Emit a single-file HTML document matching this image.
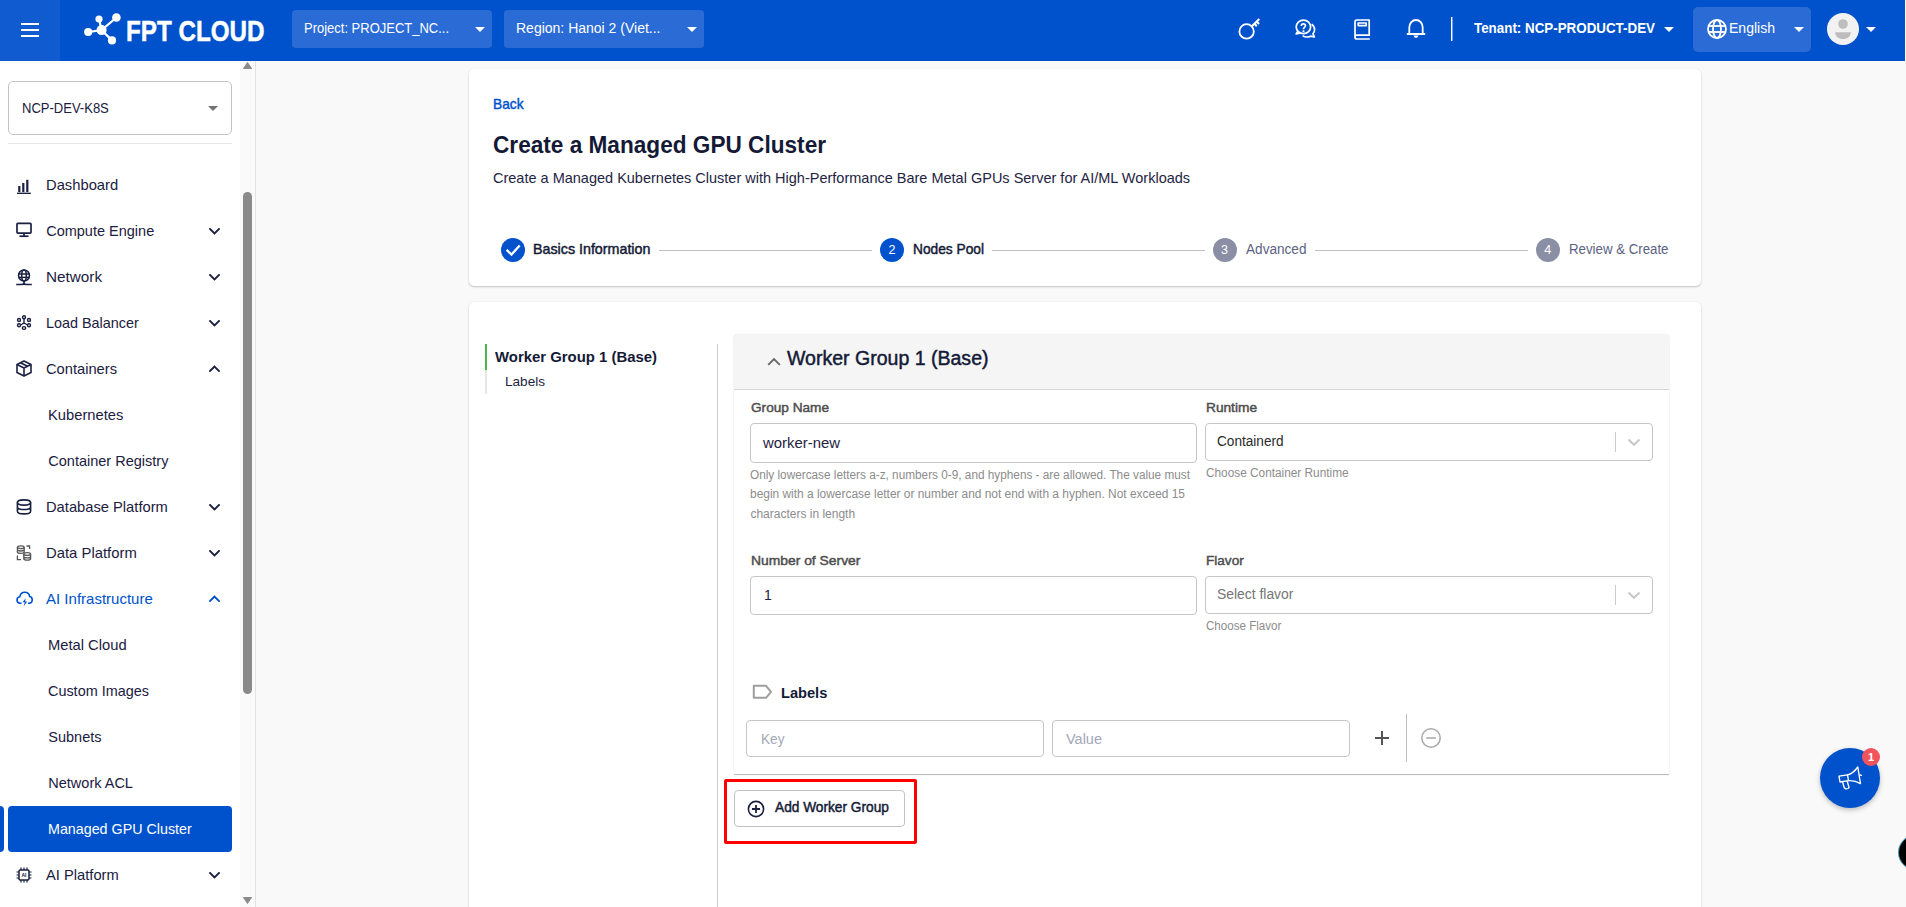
<!DOCTYPE html>
<html><head><meta charset="utf-8"><title>Create a Managed GPU Cluster</title>
<style>
html,body{margin:0;padding:0;width:1906px;height:907px;overflow:hidden;background:#f9f9f9;}
body{position:relative;font-family:"Liberation Sans",sans-serif;}
.r{position:absolute;display:block;}
.t{position:absolute;white-space:nowrap;line-height:1;transform-origin:0 0;}
</style></head><body>
<div class="r" style="left:0px;top:0px;width:1906px;height:907px;background:#f9f9f9;"></div>
<div class="r" style="left:0px;top:61px;width:240px;height:846px;background:#ffffff;"></div>
<div class="r" style="left:240px;top:61px;width:15px;height:846px;background:#fafafa;"></div>
<div class="r" style="left:255px;top:61px;width:1px;height:846px;background:#e2e2e2;"></div>
<div class="r" style="left:243px;top:192px;width:9px;height:502px;background:#8a8a8a;border-radius:5px;"></div>
<svg class="r" style="left:243px;top:62px" width="9" height="7" viewBox="0 0 9 7"><path d="M4.5 0.5 L8.5 6.5 L0.5 6.5 Z" fill="#8a8a8a" stroke="#8a8a8a" stroke-width="1" stroke-linejoin="round"/></svg>
<svg class="r" style="left:243px;top:897px" width="9" height="7" viewBox="0 0 9 7"><path d="M0.5 0.5 L8.5 0.5 L4.5 6.5 Z" fill="#8a8a8a" stroke="#8a8a8a" stroke-width="1" stroke-linejoin="round"/></svg>
<div class="r" style="left:0px;top:0px;width:1905px;height:61px;background:#0052cc;"></div>
<div class="r" style="left:1905px;top:0px;width:1px;height:61px;background:#ffffff;"></div>
<div class="r" style="left:0px;top:0px;width:60px;height:61px;background:#0f5bcf;"></div>
<div class="r" style="left:21px;top:23px;width:18px;height:2px;background:#fff;"></div>
<div class="r" style="left:21px;top:29px;width:18px;height:2px;background:#fff;"></div>
<div class="r" style="left:21px;top:35px;width:18px;height:2px;background:#fff;"></div>
<svg class="r" style="left:80px;top:10px" width="42" height="36" viewBox="0 0 42 36"><g stroke="#fff" stroke-width="2.2" stroke-linecap="round"><line x1="21.6" y1="20.1" x2="8.2" y2="22"/><line x1="21.6" y1="20.1" x2="19" y2="9"/><line x1="21.6" y1="20.1" x2="36.4" y2="7.5"/><line x1="21.6" y1="20.1" x2="32" y2="30.4"/></g><g fill="#fff"><circle cx="21.6" cy="20.1" r="5"/><circle cx="8.2" cy="22" r="4.1"/><circle cx="19" cy="9" r="3.6"/><circle cx="36.4" cy="7.5" r="4.3"/><circle cx="32" cy="30.4" r="4.1"/></g></svg>
<span class="t" style="left:125.50px;top:15.77px;font-size:29.80px;color:#fff;font-weight:700;transform:scaleX(0.8123);transform-origin:0 0;-webkit-text-stroke:0.5px #fff;">FPT CLOUD</span>
<div class="r" style="left:292px;top:10px;width:200px;height:38px;background:#2b6bd6;border-radius:4px;"></div>
<span class="t" style="left:304.00px;top:21.15px;font-size:14.00px;color:#fff;transform:scaleX(0.9273);transform-origin:0 0;">Project: PROJECT_NC...</span>
<svg class="r" style="left:475px;top:27px" width="10" height="5" viewBox="0 0 10 5"><path d="M0 0 L10 0 L5 5 Z" fill="#fff"/></svg>
<div class="r" style="left:504px;top:10px;width:200px;height:38px;background:#2b6bd6;border-radius:4px;"></div>
<span class="t" style="left:516.00px;top:21.15px;font-size:14.00px;color:#fff;transform-origin:0 0;">Region: Hanoi 2 (Viet...</span>
<svg class="r" style="left:687px;top:27px" width="10" height="5" viewBox="0 0 10 5"><path d="M0 0 L10 0 L5 5 Z" fill="#fff"/></svg>
<svg class="r" style="left:1238px;top:18px" width="24" height="24" viewBox="0 0 24 24"><g fill="none" stroke="#fff" stroke-width="1.8" stroke-linecap="round"><circle cx="8.6" cy="13.4" r="7.2"/></g><g stroke="#fff" stroke-width="2.1" stroke-linecap="butt"><line x1="13.6" y1="8.4" x2="21.3" y2="0.9"/><line x1="16.6" y1="6" x2="18.8" y2="8.2"/><line x1="18.8" y1="3.7" x2="21" y2="5.9"/></g></svg>
<svg class="r" style="left:1293px;top:19px" width="24" height="20" viewBox="0 0 24 20"><g fill="none" stroke="#fff" stroke-width="1.7" stroke-linejoin="round"><path d="M10.5 14.6 C6.5 14.6 3.2 11.6 3.2 7.9 C3.2 4.2 6.5 1.2 10.5 1.2 C14.5 1.2 17.6 4.2 17.6 7.9 C17.6 11.6 14.5 14.6 10.5 14.6 Z M4.8 12 L3.2 15 L7.8 14"/><path d="M18.6 5.2 C20.4 6.4 21.6 8.4 21.6 10.6 C21.6 12.2 21 13.6 20 14.8 L21.4 18 L17.6 17.2 C16.5 17.7 15.3 18 14 18 C12.3 18 10.8 17.5 9.6 16.6"/></g><path d="M8.3 7 C8.3 5.6 9.2 4.9 10.3 4.9 C11.5 4.9 12.4 5.7 12.4 6.8 C12.4 8.3 10.4 8.5 10.4 10.3" fill="none" stroke="#fff" stroke-width="1.6"/><rect x="9.5" y="11.3" width="1.9" height="1.8" fill="#fff"/></svg>
<svg class="r" style="left:1352px;top:19px" width="20" height="21" viewBox="0 0 20 21"><g fill="none" stroke="#fff" stroke-width="1.7" stroke-linejoin="round"><path d="M3 18 L3 3 C3 1.9 3.9 1 5 1 L17.2 1 L17.2 16.2 L5 16.2 C3.9 16.2 3 17.1 3 18.2 C3 19.3 3.9 20 5 20 L17.8 20"/><rect x="6.2" y="4" width="8" height="2.6"/></g></svg>
<svg class="r" style="left:1406px;top:18px" width="20" height="21" viewBox="0 0 20 21"><g fill="none" stroke="#fff" stroke-width="1.8" stroke-linejoin="round"><path d="M0.8 16 L19.2 16 M3.3 16 L3.3 9.6 C3.3 5.2 6.3 2 10 2 C13.7 2 16.7 5.2 16.7 9.6 L16.7 16"/></g><path d="M7.6 17.4 L12.4 17.4 C12.1 19 11.2 19.8 10 19.8 C8.8 19.8 7.9 19 7.6 17.4 Z" fill="#fff"/></svg>
<div class="r" style="left:1451px;top:17px;width:1px;height:24px;background:#ffffff;"></div>
<div class="r" style="left:1452px;top:17px;width:1px;height:24px;background:rgba(255,255,255,0.45);"></div>
<span class="t" style="left:1474.00px;top:21.03px;font-size:14.50px;color:#fff;font-weight:700;transform:scaleX(0.9221);transform-origin:0 0;">Tenant: NCP-PRODUCT-DEV</span>
<svg class="r" style="left:1664px;top:27px" width="10" height="5" viewBox="0 0 10 5"><path d="M0 0 L10 0 L5 5 Z" fill="#fff"/></svg>
<div class="r" style="left:1693px;top:7px;width:118px;height:45px;background:#2b6bd6;border-radius:5px;"></div>
<svg class="r" style="left:1707px;top:19px" width="20" height="20" viewBox="0 0 20 20"><g fill="none" stroke="#fff" stroke-width="1.8"><circle cx="10" cy="10" r="9"/><ellipse cx="10" cy="10" rx="4" ry="9"/><line x1="1.5" y1="7" x2="18.5" y2="7"/><line x1="1.5" y1="13" x2="18.5" y2="13"/></g></svg>
<span class="t" style="left:1729.00px;top:20.93px;font-size:14.50px;color:#fff;transform:scaleX(0.9672);transform-origin:0 0;">English</span>
<svg class="r" style="left:1794px;top:27px" width="10" height="5" viewBox="0 0 10 5"><path d="M0 0 L10 0 L5 5 Z" fill="#fff"/></svg>
<svg class="r" style="left:1827px;top:13px" width="32" height="32" viewBox="0 0 32 32"><circle cx="16" cy="16" r="16" fill="#f2f2f2"/><circle cx="16" cy="11" r="4.8" fill="#bdbdbd"/><path d="M8.2 19.2 L23.8 19.2 C23.8 23.2 20.4 26 16 26 C11.6 26 8.2 23.2 8.2 19.2 Z" fill="#bdbdbd"/></svg>
<svg class="r" style="left:1866px;top:27px" width="10" height="5" viewBox="0 0 10 5"><path d="M0 0 L10 0 L5 5 Z" fill="#fff"/></svg>
<div class="r" style="left:8px;top:81px;width:224px;height:54px;box-sizing:border-box;border:1px solid #c4c4c4;border-radius:5px;background:#fff;"></div>
<span class="t" style="left:22.30px;top:101.15px;font-size:14.00px;color:#1b2040;transform:scaleX(0.9297);transform-origin:0 0;">NCP-DEV-K8S</span>
<svg class="r" style="left:208px;top:106px" width="10" height="5" viewBox="0 0 10 5"><path d="M0 0 L10 0 L5 5 Z" fill="#757575"/></svg>
<div class="r" style="left:8px;top:143px;width:224px;height:1px;background:#e3e5ea;"></div>
<span class="t" style="left:46.20px;top:177.93px;font-size:14.50px;color:#1b2040;transform:scaleX(1.0178);">Dashboard</span>
<span class="t" style="left:46.20px;top:223.93px;font-size:14.50px;color:#1b2040;">Compute Engine</span>
<svg class="r" style="left:209px;top:228px" width="11" height="7" viewBox="0 0 11 7"><path d="M1 1 L5.5 5.5 L10 1" fill="none" stroke="#1b2040" stroke-width="1.9" stroke-linecap="square"/></svg>
<span class="t" style="left:46.20px;top:269.93px;font-size:14.50px;color:#1b2040;transform:scaleX(1.0549);">Network</span>
<svg class="r" style="left:209px;top:274px" width="11" height="7" viewBox="0 0 11 7"><path d="M1 1 L5.5 5.5 L10 1" fill="none" stroke="#1b2040" stroke-width="1.9" stroke-linecap="square"/></svg>
<span class="t" style="left:46.20px;top:315.93px;font-size:14.50px;color:#1b2040;transform:scaleX(0.9923);">Load Balancer</span>
<svg class="r" style="left:209px;top:320px" width="11" height="7" viewBox="0 0 11 7"><path d="M1 1 L5.5 5.5 L10 1" fill="none" stroke="#1b2040" stroke-width="1.9" stroke-linecap="square"/></svg>
<span class="t" style="left:46.20px;top:361.93px;font-size:14.50px;color:#1b2040;transform:scaleX(1.0125);">Containers</span>
<svg class="r" style="left:209px;top:365px" width="11" height="7" viewBox="0 0 11 7"><path d="M1 6 L5.5 1.5 L10 6" fill="none" stroke="#1b2040" stroke-width="1.9" stroke-linecap="square"/></svg>
<span class="t" style="left:48.30px;top:407.93px;font-size:14.50px;color:#1b2040;transform:scaleX(1.0153);">Kubernetes</span>
<span class="t" style="left:48.30px;top:453.93px;font-size:14.50px;color:#1b2040;">Container Registry</span>
<span class="t" style="left:46.20px;top:499.93px;font-size:14.50px;color:#1b2040;transform:scaleX(1.0143);">Database Platform</span>
<svg class="r" style="left:209px;top:504px" width="11" height="7" viewBox="0 0 11 7"><path d="M1 1 L5.5 5.5 L10 1" fill="none" stroke="#1b2040" stroke-width="1.9" stroke-linecap="square"/></svg>
<span class="t" style="left:46.20px;top:545.93px;font-size:14.50px;color:#1b2040;transform:scaleX(1.0243);">Data Platform</span>
<svg class="r" style="left:209px;top:550px" width="11" height="7" viewBox="0 0 11 7"><path d="M1 1 L5.5 5.5 L10 1" fill="none" stroke="#1b2040" stroke-width="1.9" stroke-linecap="square"/></svg>
<span class="t" style="left:46.20px;top:591.93px;font-size:14.50px;color:#0052cc;transform:scaleX(1.0354);">AI Infrastructure</span>
<svg class="r" style="left:209px;top:595px" width="11" height="7" viewBox="0 0 11 7"><path d="M1 6 L5.5 1.5 L10 6" fill="none" stroke="#0052cc" stroke-width="1.9" stroke-linecap="square"/></svg>
<span class="t" style="left:48.30px;top:637.93px;font-size:14.50px;color:#1b2040;transform:scaleX(1.0159);">Metal Cloud</span>
<span class="t" style="left:48.30px;top:683.93px;font-size:14.50px;color:#1b2040;transform:scaleX(0.9937);">Custom Images</span>
<span class="t" style="left:48.30px;top:729.93px;font-size:14.50px;color:#1b2040;">Subnets</span>
<span class="t" style="left:48.30px;top:775.93px;font-size:14.50px;color:#1b2040;">Network ACL</span>
<div class="r" style="left:8px;top:806px;width:224px;height:46px;background:#0052cc;border-radius:4px;"></div>
<div class="r" style="left:0px;top:806px;width:4px;height:46px;background:#0052cc;border-radius:0 4px 4px 0;"></div>
<span class="t" style="left:48.30px;top:821.93px;font-size:14.50px;color:#fff;transform:scaleX(0.9851);">Managed GPU Cluster</span>
<span class="t" style="left:46.20px;top:867.93px;font-size:14.50px;color:#1b2040;transform:scaleX(1.0137);">AI Platform</span>
<svg class="r" style="left:209px;top:872px" width="11" height="7" viewBox="0 0 11 7"><path d="M1 1 L5.5 5.5 L10 1" fill="none" stroke="#1b2040" stroke-width="1.9" stroke-linecap="square"/></svg>
<svg class="r" style="left:16px;top:178px" width="16" height="16" viewBox="0 0 16 16"><g fill="#1b2040"><rect x="2.2" y="8" width="2.2" height="6"/><rect x="6.2" y="5" width="2.2" height="9"/><rect x="10.2" y="1.8" width="2.2" height="12.2"/><rect x="1" y="14.6" width="13.8" height="1.4"/></g></svg>
<svg class="r" style="left:16px;top:222px" width="16" height="16" viewBox="0 0 16 16"><g fill="none" stroke="#1b2040" stroke-width="1.7"><rect x="1" y="1.3" width="14" height="9.8" rx="0.8"/><line x1="8" y1="11" x2="8" y2="14"/><line x1="3.5" y1="14.2" x2="12.5" y2="14.2"/></g></svg>
<svg class="r" style="left:16px;top:269px" width="16" height="17" viewBox="0 0 16 17"><g fill="none" stroke="#1b2040" stroke-width="1.5"><circle cx="8" cy="6.5" r="5.5"/><ellipse cx="8" cy="6.5" rx="2.3" ry="5.5"/><line x1="2.5" y1="5" x2="13.5" y2="5"/><line x1="2.5" y1="8.4" x2="13.5" y2="8.4"/><path d="M8 12 L8 13.5 C8 14.6 7 15.4 6 15.4 L0.2 15.4 M8 13.5 C8 14.6 9 15.4 10 15.4 L15.8 15.4"/></g></svg>
<svg class="r" style="left:16px;top:315px" width="16" height="16" viewBox="0 0 16 16"><g fill="none" stroke="#1b2040" stroke-width="1.4"><circle cx="8" cy="2.2" r="1.5"/><circle cx="3" cy="5" r="1.5"/><circle cx="13" cy="5" r="1.5"/><circle cx="3" cy="10.3" r="1.5"/><circle cx="13" cy="10.3" r="1.5"/><ellipse cx="8" cy="13" rx="1.7" ry="1.4"/><path d="M8 3.7 L8 8 L4.3 10 M8 8 L11.7 10"/></g></svg>
<svg class="r" style="left:16px;top:360px" width="16" height="17" viewBox="0 0 16 17"><g fill="none" stroke="#1b2040" stroke-width="1.6" stroke-linejoin="round"><path d="M8 1 L15 4.5 L15 12.5 L8 16 L1 12.5 L1 4.5 Z"/><path d="M1 4.5 L8 8 L15 4.5 M8 8 L8 16 M4.5 2.8 L11.5 6.3"/></g></svg>
<svg class="r" style="left:16px;top:499px" width="16" height="16" viewBox="0 0 16 16"><g fill="none" stroke="#1b2040" stroke-width="1.6"><ellipse cx="8" cy="3.5" rx="6.6" ry="2.6"/><path d="M1.4 3.5 L1.4 12.2 C1.4 13.7 4.4 14.9 8 14.9 C11.6 14.9 14.6 13.7 14.6 12.2 L14.6 3.5 M1.4 7.9 C1.4 9.4 4.4 10.5 8 10.5 C11.6 10.5 14.6 9.4 14.6 7.9"/></g></svg>
<svg class="r" style="left:16px;top:545px" width="16" height="16" viewBox="0 0 16 16"><g fill="none" stroke="#555" stroke-width="1.3"><ellipse cx="4.8" cy="2.2" rx="3.4" ry="1.4"/><path d="M1.4 2.2 L1.4 7 C1.4 7.8 2.9 8.4 4.8 8.4 C6.7 8.4 8.2 7.8 8.2 7 L8.2 2.2 M1.4 4.6 C1.4 5.4 2.9 6 4.8 6 C6.7 6 8.2 5.4 8.2 4.6"/><ellipse cx="11.2" cy="9" rx="3.4" ry="1.4"/><path d="M7.8 9 L7.8 13.8 C7.8 14.6 9.3 15.2 11.2 15.2 C13.1 15.2 14.6 14.6 14.6 13.8 L14.6 9 M7.8 11.4 C7.8 12.2 9.3 12.8 11.2 12.8 C13.1 12.8 14.6 12.2 14.6 11.4"/><path d="M10.5 1 L13.6 1 L13.6 4 M1.4 10.6 L1.4 14.6 L5 14.6"/></g></svg>
<svg class="r" style="left:16px;top:591px" width="17" height="16" viewBox="0 0 17 16"><g fill="none" stroke="#0052cc" stroke-width="1.6" stroke-linejoin="round"><path d="M5.5 12.2 L4.2 12.2 C2.3 12.2 1 10.8 1 9 C1 7.3 2.2 6 3.8 5.8 C4.2 3.1 6.3 1.2 8.8 1.2 C11.3 1.2 13.3 3 13.7 5.5 C15.2 5.8 16.2 7.1 16.2 8.7 C16.2 10.6 14.8 12.2 12.8 12.2 L12 12.2"/></g><path d="M9.8 7 L6.6 11.2 L8.8 11.2 L7.6 15.6 L11.2 10.6 L9 10.6 Z" fill="#0052cc"/></svg>
<svg class="r" style="left:16px;top:867px" width="16" height="16" viewBox="0 0 16 16"><g fill="none" stroke="#1b2040" stroke-width="1.5"><rect x="3" y="3" width="10" height="10" rx="1.2"/></g><g stroke="#1b2040" stroke-width="1.2"><path d="M5 0.5 L5 3 M8 0.5 L8 3 M11 0.5 L11 3 M5 13 L5 15.5 M8 13 L8 15.5 M11 13 L11 15.5 M0.5 5 L3 5 M0.5 8 L3 8 M0.5 11 L3 11 M13 5 L15.5 5 M13 8 L15.5 8 M13 11 L15.5 11"/></g><text x="8" y="10.2" font-family="Liberation Sans" font-weight="700" font-size="5" fill="#1b2040" text-anchor="middle">AI</text></svg>
<div class="r" style="left:469px;top:69px;width:1232px;height:217px;background:#fff;border-radius:5px;box-shadow:0 1px 2px rgba(0,0,0,0.22),0 0 1px rgba(0,0,0,0.08);"></div>
<div class="r" style="left:469px;top:302px;width:1232px;height:640px;background:#fff;border-radius:5px;box-shadow:0 1px 2px rgba(0,0,0,0.22),0 0 1px rgba(0,0,0,0.08);"></div>
<span class="t" style="left:493.00px;top:97.34px;font-size:14.60px;color:#0052cc;-webkit-text-stroke:0.45px #0052cc;transform:scaleX(0.9397);transform-origin:0 0;">Back</span>
<span class="t" style="left:493.00px;top:133.08px;font-size:24.00px;color:#141a36;font-weight:700;transform:scaleX(0.9422);transform-origin:0 0;">Create a Managed GPU Cluster</span>
<span class="t" style="left:493.00px;top:171.33px;font-size:14.50px;color:#1e2442;transform-origin:0 0;">Create a Managed Kubernetes Cluster with High-Performance Bare Metal GPUs Server for AI/ML Workloads</span>
<div class="r" style="left:659px;top:250px;width:213px;height:1px;background:#bdbdbd;"></div>
<div class="r" style="left:992px;top:250px;width:213px;height:1px;background:#bdbdbd;"></div>
<div class="r" style="left:1315px;top:250px;width:213px;height:1px;background:#bdbdbd;"></div>
<svg class="r" style="left:501px;top:238px" width="24" height="24" viewBox="0 0 24 24"><circle cx="12" cy="12" r="12" fill="#0052cc"/><path d="M5.6 11.9 L10.5 16.5 L18.7 7.4" fill="none" stroke="#fff" stroke-width="2.3"/></svg>
<span class="t" style="left:533.00px;top:241.98px;font-size:14.20px;color:#141a36;-webkit-text-stroke:0.45px #141a36;transform:scaleX(1.0059);transform-origin:0 0;">Basics Information</span>
<svg class="r" style="left:880px;top:238px" width="24" height="24" viewBox="0 0 24 24"><circle cx="12" cy="12" r="12" fill="#0052cc"/></svg>
<span class="t" style="left:888.50px;top:243.62px;font-size:12.50px;color:#fff;">2</span>
<span class="t" style="left:912.60px;top:241.98px;font-size:14.20px;color:#141a36;-webkit-text-stroke:0.45px #141a36;transform:scaleX(0.9671);transform-origin:0 0;">Nodes Pool</span>
<svg class="r" style="left:1213px;top:238px" width="24" height="24" viewBox="0 0 24 24"><circle cx="12" cy="12" r="12" fill="#8a8fa6"/></svg>
<span class="t" style="left:1221.00px;top:243.62px;font-size:12.50px;color:#fff;">3</span>
<span class="t" style="left:1246.00px;top:242.15px;font-size:14.00px;color:#5b6283;transform:scaleX(0.9716);transform-origin:0 0;">Advanced</span>
<svg class="r" style="left:1536px;top:238px" width="24" height="24" viewBox="0 0 24 24"><circle cx="12" cy="12" r="12" fill="#8a8fa6"/></svg>
<span class="t" style="left:1544.20px;top:243.62px;font-size:12.50px;color:#fff;">4</span>
<span class="t" style="left:1568.70px;top:242.15px;font-size:14.00px;color:#5b6283;transform:scaleX(0.9472);transform-origin:0 0;">Review &amp; Create</span>
<div class="r" style="left:485px;top:344px;width:2px;height:26px;background:#4cb648;"></div>
<div class="r" style="left:485px;top:370px;width:2px;height:24px;background:#e6e6e6;"></div>
<span class="t" style="left:495.30px;top:348.68px;font-size:15.50px;color:#141a36;font-weight:700;transform:scaleX(0.9612);transform-origin:0 0;">Worker Group 1 (Base)</span>
<span class="t" style="left:505.00px;top:375.17px;font-size:13.50px;color:#1e2442;transform:scaleX(1.0055);transform-origin:0 0;">Labels</span>
<div class="r" style="left:717px;top:344px;width:1px;height:600px;background:#cfcfcf;"></div>
<div class="r" style="left:734px;top:334px;width:935px;height:440px;background:#fff;border-radius:4px 4px 0 0;box-shadow:0 1px 1px rgba(0,0,0,0.28),0 0 1px rgba(0,0,0,0.18);"></div>
<div class="r" style="left:734px;top:334px;width:935px;height:55px;background:#f5f5f5;border-radius:4px 4px 0 0;"></div>
<div class="r" style="left:734px;top:389px;width:935px;height:1px;background:#d6d6d6;"></div>
<svg class="r" style="left:767px;top:357px" width="14" height="9" viewBox="0 0 14 9"><path d="M1.2 7.8 L7 2 L12.8 7.8" fill="none" stroke="#666" stroke-width="1.8"/></svg>
<span class="t" style="left:787.00px;top:348.07px;font-size:20.00px;color:#141a36;transform:scaleX(0.9764);transform-origin:0 0;-webkit-text-stroke:0.45px #141a36;">Worker Group 1 (Base)</span>
<span class="t" style="left:750.50px;top:400.60px;font-size:13.00px;color:#4d4d4d;-webkit-text-stroke:0.45px #4d4d4d;transform:scaleX(1.0481);transform-origin:0 0;">Group Name</span>
<div class="r" style="left:750px;top:423px;width:447px;height:40px;box-sizing:border-box;border:1px solid #c6c6c6;border-radius:4px;background:#fff;"></div>
<span class="t" style="left:763.00px;top:435.93px;font-size:14.50px;color:#1e2442;transform:scaleX(1.0275);transform-origin:0 0;">worker-new</span>
<span class="t" style="left:750.40px;top:468.54px;font-size:12.00px;color:#8c8c8c;transform:scaleX(0.9821);transform-origin:0 0;">Only lowercase letters a-z, numbers 0-9, and hyphens - are allowed. The value must</span>
<span class="t" style="left:750.40px;top:488.24px;font-size:12.00px;color:#8c8c8c;transform:scaleX(0.9940);transform-origin:0 0;">begin with a lowercase letter or number and not end with a hyphen. Not exceed 15</span>
<span class="t" style="left:750.40px;top:508.34px;font-size:12.00px;color:#8c8c8c;transform-origin:0 0;">characters in length</span>
<span class="t" style="left:1206.00px;top:400.80px;font-size:13.00px;color:#4d4d4d;-webkit-text-stroke:0.45px #4d4d4d;transform:scaleX(1.0535);transform-origin:0 0;">Runtime</span>
<div class="r" style="left:1205px;top:423px;width:448px;height:38px;box-sizing:border-box;border:1px solid #c6c6c6;border-radius:4px;background:#fff;"></div>
<span class="t" style="left:1217.00px;top:433.85px;font-size:14.00px;color:#2a2a2a;transform:scaleX(0.9724);transform-origin:0 0;">Containerd</span>
<div class="r" style="left:1615px;top:432px;width:1px;height:20px;background:#cccccc;"></div>
<svg class="r" style="left:1627px;top:438px" width="14" height="9" viewBox="0 0 14 9"><path d="M1.5 1.5 L7 6.8 L12.5 1.5" fill="none" stroke="#c8c8c8" stroke-width="2"/></svg>
<span class="t" style="left:1205.90px;top:467.04px;font-size:12.00px;color:#8c8c8c;transform:scaleX(0.9852);transform-origin:0 0;">Choose Container Runtime</span>
<span class="t" style="left:750.60px;top:553.90px;font-size:13.00px;color:#4d4d4d;-webkit-text-stroke:0.45px #4d4d4d;transform:scaleX(1.0663);transform-origin:0 0;">Number of Server</span>
<div class="r" style="left:750px;top:576px;width:447px;height:39px;box-sizing:border-box;border:1px solid #c6c6c6;border-radius:4px;background:#fff;"></div>
<span class="t" style="left:764.00px;top:587.95px;font-size:14.00px;color:#1e2442;">1</span>
<span class="t" style="left:1206.00px;top:553.70px;font-size:13.00px;color:#4d4d4d;-webkit-text-stroke:0.45px #4d4d4d;transform:scaleX(1.0438);transform-origin:0 0;">Flavor</span>
<div class="r" style="left:1205px;top:576px;width:448px;height:38px;box-sizing:border-box;border:1px solid #c6c6c6;border-radius:4px;background:#fff;"></div>
<span class="t" style="left:1216.50px;top:587.05px;font-size:14.00px;color:#757575;transform:scaleX(0.9917);transform-origin:0 0;">Select flavor</span>
<div class="r" style="left:1615px;top:585px;width:1px;height:20px;background:#cccccc;"></div>
<svg class="r" style="left:1627px;top:591px" width="14" height="9" viewBox="0 0 14 9"><path d="M1.5 1.5 L7 6.8 L12.5 1.5" fill="none" stroke="#c8c8c8" stroke-width="2"/></svg>
<span class="t" style="left:1206.00px;top:620.04px;font-size:12.00px;color:#8c8c8c;transform:scaleX(0.9662);transform-origin:0 0;">Choose Flavor</span>
<svg class="r" style="left:752px;top:684px" width="21" height="16" viewBox="0 0 21 16"><path d="M1.8 1.8 L14 1.8 L19 7.8 L14 13.8 L1.8 13.8 Z" fill="none" stroke="#9e9e9e" stroke-width="2" stroke-linejoin="round"/></svg>
<span class="t" style="left:780.80px;top:684.98px;font-size:15.50px;color:#141a36;font-weight:700;transform:scaleX(0.9429);transform-origin:0 0;">Labels</span>
<div class="r" style="left:746px;top:720px;width:298px;height:37px;box-sizing:border-box;border:1px solid #c6c6c6;border-radius:4px;background:#fff;"></div>
<span class="t" style="left:760.50px;top:732.25px;font-size:14.00px;color:#a3a7b7;transform:scaleX(0.9741);transform-origin:0 0;">Key</span>
<div class="r" style="left:1052px;top:720px;width:298px;height:37px;box-sizing:border-box;border:1px solid #c6c6c6;border-radius:4px;background:#fff;"></div>
<span class="t" style="left:1066.20px;top:732.15px;font-size:14.00px;color:#a3a7b7;transform:scaleX(1.0354);transform-origin:0 0;">Value</span>
<svg class="r" style="left:1375px;top:731px" width="14" height="14" viewBox="0 0 14 14"><path d="M7 0 L7 14 M0 7 L14 7" stroke="#555" stroke-width="2"/></svg>
<div class="r" style="left:1406px;top:714px;width:1px;height:48px;background:#bdbdbd;"></div>
<svg class="r" style="left:1420px;top:727px" width="22" height="22" viewBox="0 0 22 22"><circle cx="11" cy="11" r="9.2" fill="none" stroke="#ababab" stroke-width="1.6"/><line x1="6.2" y1="11" x2="15.8" y2="11" stroke="#ababab" stroke-width="1.6"/></svg>
<div class="r" style="left:724px;top:779px;width:193px;height:65px;box-sizing:border-box;border:3px solid #ff0000;border-radius:2px;"></div>
<div class="r" style="left:734px;top:790px;width:171px;height:37px;box-sizing:border-box;border:1px solid #c2c2c2;border-radius:4px;background:#fff;"></div>
<svg class="r" style="left:747px;top:800px" width="18" height="18" viewBox="0 0 18 18"><circle cx="9" cy="9" r="7.6" fill="none" stroke="#1b2040" stroke-width="1.6"/><path d="M9 5 L9 13 M5 9 L13 9" stroke="#1b2040" stroke-width="1.8"/></svg>
<span class="t" style="left:774.60px;top:799.98px;font-size:14.20px;color:#141a36;-webkit-text-stroke:0.45px #141a36;transform:scaleX(0.9651);transform-origin:0 0;">Add Worker Group</span>
<div class="r" style="left:1820px;top:748px;width:60px;height:60px;background:#0052cc;border-radius:50%;box-shadow:0 2px 5px rgba(0,0,0,0.25);"></div>
<svg class="r" style="left:1830px;top:758px" width="40" height="40" viewBox="0 0 40 40"><g fill="none" stroke="#fff" stroke-width="1.35" stroke-linejoin="round" stroke-linecap="round"><path d="M9 18.2 L17.5 16.8 L18.5 22.6 L10 24 Z"/><path d="M17.5 16.8 C21.5 16 25 13 27.8 9 L30.5 25.6 C27 23.5 23 22.3 18.5 22.6"/><path d="M12.5 23.8 L14.2 29.5 C14.6 30.8 16.5 31.2 18 30.5 C19 30 19.2 29 18.7 28.2 L17.2 23.3"/><path d="M30.2 17 L31.4 17.4"/></g></svg>
<div class="r" style="left:1862px;top:748px;width:18px;height:18px;background:#f0535b;border-radius:50%;"></div>
<span class="t" style="left:1868.00px;top:752.19px;font-size:11.00px;color:#fff;font-weight:700;">1</span>
<div class="r" style="left:1899px;top:836px;width:33px;height:33px;background:#000;border-radius:50%;box-shadow:0 0 0 1px #4a8ea8;"></div>
</body></html>
